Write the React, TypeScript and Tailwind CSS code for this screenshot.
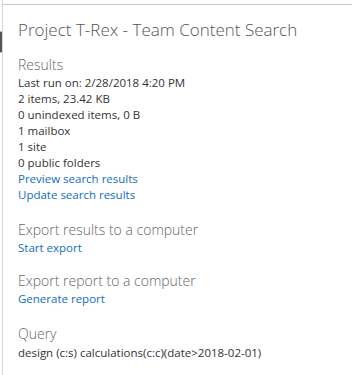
import React from 'react';

const stats = [
  'Last run on: 2/28/2018 4:20 PM',
  '2 items, 23.42 KB',
  '0 unindexed items, 0 B',
  '1 mailbox',
  '1 site',
  '0 public folders',
];

const Link: React.FC<{ children: React.ReactNode }> = ({ children }) => (
  <div className="text-[11.5px] leading-[16px] text-[#106ebe] cursor-pointer">{children}</div>
);

const Heading: React.FC<{ children: React.ReactNode }> = ({ children }) => (
  <div className="text-[14px] leading-[20px] font-light text-[#666]">{children}</div>
);

const App: React.FC = () => {
  return (
    <div
      className="relative w-[352px] h-[375px] bg-white flex overflow-hidden"
      style={{ fontFamily: '"Open Sans", "Segoe UI", sans-serif' }}
    >
      {/* left gutter with scroll thumb */}
      <div className="w-[2px] shrink-0 relative">
        <div className="absolute left-0 top-[31px] w-[2px] h-[22px] bg-[#555] border-y border-[#9cc3e5]" />
      </div>

      <div className="flex-1 border-l border-[#d0d6db]">
        <div className="mt-[4px] border-t border-[#bcc6ce] pl-[15px] pt-[13px]">
          <div className="text-[17px] leading-[24px] font-light text-[#555] mb-[13px]">
            Project T-Rex - Team Content Search
          </div>

          <Heading>Results</Heading>
          <div className="text-[11.5px] leading-[16px] text-[#333]">
            {stats.map((s) => (
              <div key={s}>{s}</div>
            ))}
          </div>
          <Link>Preview search results</Link>
          <Link>Update search results</Link>

          <div className="mt-[17px]">
            <Heading>Export results to a computer</Heading>
            <Link>Start export</Link>
          </div>

          <div className="mt-[15px]">
            <Heading>Export report to a computer</Heading>
            <Link>Generate report</Link>
          </div>

          <div className="mt-[17px]">
            <Heading>Query</Heading>
            <div className="mt-[1px] text-[11.5px] leading-[16px] text-[#333]">
              design (c:s) calculations(c:c)(date&gt;2018-02-01)
            </div>
          </div>
        </div>
      </div>
    </div>
  );
};

export default App;
